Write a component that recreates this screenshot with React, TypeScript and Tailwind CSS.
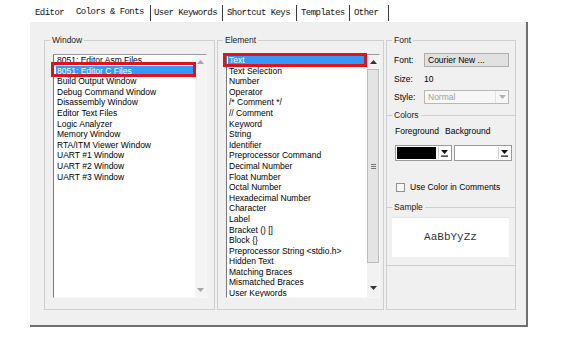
import React from "react";

const windowItems = [
  "8051: Editor Asm Files",
  "8051: Editor C Files",
  "Build Output Window",
  "Debug Command Window",
  "Disassembly Window",
  "Editor Text Files",
  "Logic Analyzer",
  "Memory Window",
  "RTA/ITM Viewer Window",
  "UART #1 Window",
  "UART #2 Window",
  "UART #3 Window",
];

const elementItems = [
  "Text",
  "Text Selection",
  "Number",
  "Operator",
  "/* Comment */",
  "// Comment",
  "Keyword",
  "String",
  "Identifier",
  "Preprocessor Command",
  "Decimal Number",
  "Float Number",
  "Octal Number",
  "Hexadecimal Number",
  "Character",
  "Label",
  "Bracket () []",
  "Block {}",
  "Preprocessor String <stdio.h>",
  "Hidden Text",
  "Matching Braces",
  "Mismatched Braces",
  "User Keywords",
];

const tabs = [
  { label: "Editor", w: "w-[41px]", sep: false },
  { label: "Colors & Fonts", w: "w-[74px] -mt-[1px]", sep: true },
  { label: "User Keywords", w: "w-[71px] pl-[3px]", sep: true },
  { label: "Shortcut Keys", w: "w-[73px] pl-[4px]", sep: true },
  { label: "Templates", w: "w-[52px] pl-[4px]", sep: true },
  { label: "Other", w: "w-[38px] pl-[4px]", sep: true },
];

const Tri = ({ up, color }: { up?: boolean; color: string }) => (
  <svg width="7" height="4" viewBox="0 0 7 4">
    <polygon points={up ? "0,4 7,4 3.5,0" : "0,0 7,0 3.5,4"} fill={color} />
  </svg>
);

// the little "down arrow over a bar" used by the colour pickers
const PickArrow = () => (
  <svg width="7" height="8" viewBox="0 0 7 8">
    <polygon points="0,1 7,1 3.5,5" fill="#111" />
    <rect x="0" y="6.5" width="7" height="1.2" fill="#111" />
  </svg>
);

const GroupTitle = ({ children }: { children: React.ReactNode }) => (
  <span className="-mt-[6px] ml-[5px] h-[11px] w-fit bg-[#f0f0f0] px-[2px] leading-[11px] text-[#1a1a1a]">
    {children}
  </span>
);

const Row = ({
  text,
  selected,
  mark,
}: {
  text: string;
  selected?: boolean;
  mark?: string;
}) => (
  <div
    className={
      "relative h-[10.6px] whitespace-nowrap px-[1px] leading-[10.6px] " +
      (selected ? "bg-[#3399ff] text-white" : "text-black")
    }
  >
    {text}
    {mark && <div className={"absolute border-[3px] border-[#e2121d] " + mark} />}
  </div>
);

export default function App() {
  return (
    <div className="h-[341px] w-[574px] bg-white font-['Liberation_Sans',Arial,sans-serif] text-[8.5px]">
      {/* tab strip */}
      <div className="flex h-[22px] items-start pl-[35px] pt-[5px] font-['Liberation_Mono','Courier_New',monospace] text-[9px] leading-[16px] tracking-[-0.55px] text-[#111]">
        {tabs.map((t) => (
          <React.Fragment key={t.label}>
            <span className={"whitespace-nowrap " + t.w}>{t.label}</span>
            {t.sep && <span className="h-[16px] w-px bg-[#3a3a3a]" />}
          </React.Fragment>
        ))}
      </div>

      {/* page panel */}
      <div className="ml-[30px] flex h-[305px] w-[498px] border-b-2 border-r-2 border-[#707070] bg-[#f0f0f0] pt-[18px]">
        {/* Window group */}
        <div className="ml-[14px] flex h-[270px] w-[171px] flex-col border border-[#cfcfcf]">
          <GroupTitle>Window</GroupTitle>
          <div className="ml-[8px] mt-[8px] flex h-[244px] w-[154px] border border-b-[#f8f8f8] border-l-[#7a7a7a] border-r-[#f8f8f8] border-t-[#9a9a9a] bg-white">
            <div className="flex-1 pl-[2px]">
              {windowItems.map((w, i) => (
                <Row
                  key={w}
                  text={w}
                  selected={i === 1}
                  mark={i === 1 ? "-left-[5px] -right-[1px] -top-[3.6px] -bottom-[1px]" : undefined}
                />
              ))}
            </div>
            <div className="flex w-[11px] flex-col items-center justify-between bg-[#f4f4f4] py-[5px]">
              <Tri up color="#a8a8a8" />
              <Tri color="#a8a8a8" />
            </div>
          </div>
        </div>

        {/* Element group */}
        <div className="ml-[2px] flex h-[270px] w-[167px] flex-col border border-[#cfcfcf]">
          <GroupTitle>Element</GroupTitle>
          <div className="ml-[8px] mt-[8px] flex h-[244px] w-[154px] border border-b-[#f8f8f8] border-l-[#7a7a7a] border-r-[#f8f8f8] border-t-[#9a9a9a] bg-white">
            <div className="flex-1 pl-[1px]">
              {elementItems.slice(0, 22).map((e, i) => (
                <Row
                  key={e}
                  text={e}
                  selected={i === 0}
                  mark={i === 0 ? "-left-[5px] right-0 -top-[2.5px] -bottom-[1px]" : undefined}
                />
              ))}
              <div className="h-[8.5px] overflow-hidden">
                <Row text={elementItems[22]} />
              </div>
            </div>
            <div className="flex w-[12px] flex-col bg-[#f2f2f2]">
              <div className="flex h-[14px] items-center justify-center">
                <Tri up color="#333" />
              </div>
              <div className="flex h-[194px] flex-col items-center justify-center gap-[1px] border border-[#bcbcbc] bg-[#e4e4e4]">
                <span className="h-px w-[5px] bg-[#777]" />
                <span className="h-px w-[5px] bg-[#777]" />
                <span className="h-px w-[5px] bg-[#777]" />
              </div>
              <div className="h-[18px]" />
              <div className="flex h-[14px] items-center justify-center">
                <Tri color="#333" />
              </div>
            </div>
          </div>
        </div>

        {/* Font group */}
        <div className="ml-[2px] flex h-[270px] w-[130px] flex-col border border-[#cfcfcf]">
          <GroupTitle>Font</GroupTitle>
          <div className="mt-[7px] flex h-[14px] items-center pl-[7px]">
            <span className="w-[30px]">Font:</span>
            <div className="flex h-[14px] w-[85px] items-center border border-[#adadad] bg-[#e1e1e1] pl-[3px]">
              Courier New ...
            </div>
          </div>
          <div className="mt-[5px] flex h-[14px] items-center pl-[7px]">
            <span className="w-[30px]">Size:</span>
            <span>10</span>
          </div>
          <div className="mt-[4px] flex h-[14px] items-center pl-[7px]">
            <span className="w-[30px]">Style:</span>
            <div className="flex h-[14px] w-[85px] items-center justify-between border border-[#b8b8b8] bg-[#f7f7f7] pl-[3px] text-[#a0a0a0]">
              Normal
              <span className="flex h-full w-[13px] items-center justify-center border-l border-[#e2e2e2]">
                <Tri color="#b0b0b0" />
              </span>
            </div>
          </div>

          {/* Colors */}
          <div className="mt-[11px] flex flex-col border-t border-[#cfcfcf]">
            <GroupTitle>Colors</GroupTitle>
            <div className="mt-[5px] flex h-[11px] items-center pl-[8px]">
              <span className="w-[50px]">Foreground</span>
              <span>Background</span>
            </div>
            <div className="mt-[8px] flex pl-[8px]">
              <div className="flex h-[16px] w-[57px] items-center border border-[#9a9a9a] bg-white p-[1px]">
                <span className="h-full w-[39px] bg-black" />
                <span className="ml-[2px] flex h-full flex-1 items-center justify-center border-l border-[#cfcfcf]">
                  <PickArrow />
                </span>
              </div>
              <div className="ml-[2px] flex h-[16px] w-[58px] items-center border border-[#9a9a9a] bg-white p-[1px]">
                <span className="h-full w-[40px] bg-white" />
                <span className="ml-[2px] flex h-full flex-1 items-center justify-center border-l border-[#cfcfcf]">
                  <PickArrow />
                </span>
              </div>
            </div>
            <div className="mt-[21px] flex h-[10px] items-center pl-[9px]">
              <span className="h-[9px] w-[9px] border border-[#8e8f8f] bg-[#f8f8f8]" />
              <span className="ml-[5px]">Use Color in Comments</span>
            </div>
          </div>

          {/* Sample */}
          <div className="mt-[15px] flex flex-col border-b border-t border-[#cfcfcf] pb-[8px]">
            <GroupTitle>Sample</GroupTitle>
            <div className="ml-[5px] mt-[4px] flex h-[40px] w-[117px] items-center justify-center border-t border-[#e6e6e6] bg-white font-['Liberation_Mono','Courier_New',monospace] text-[11px] text-[#333]">
              AaBbYyZz
            </div>
          </div>
        </div>
      </div>
    </div>
  );
}
